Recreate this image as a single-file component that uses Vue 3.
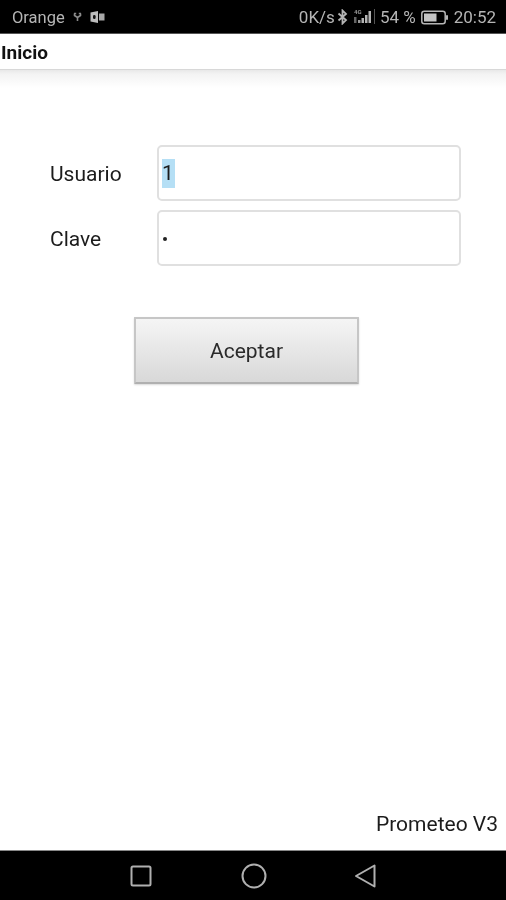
<template>
  <div class="screen">
    <!-- Status bar -->
    <div class="status-bar">
      <div class="status-left">
        <span>Orange</span>
        <svg class="usb" width="9" height="10" viewBox="0 0 9 10">
          <path d="M1 1.5h2.2M5.8 1.5H8M1.5 1.5v2L4.5 5.5l3-2v-2M4.5 5.5V9" fill="none" stroke="#8a8a8a" stroke-width="1.6" />
        </svg>
        <svg class="outlook" width="15" height="12" viewBox="0 0 15 12">
          <path d="M0.5 1.5L8 0v12L0.5 10.5z" fill="#bdbdbd" />
          <rect x="9" y="2.5" width="5.5" height="7" fill="#a8a8a8" />
          <rect x="3" y="4" width="2.6" height="4" rx="1.2" fill="#111" />
        </svg>
      </div>
      <div class="status-right">
        <span class="speed">0K/s</span>
        <svg class="bt" width="11" height="16" viewBox="0 0 11 15">
          <path d="M1.5 4l7.5 6.6L5.5 14V1L9 4.4 1.5 11" fill="none" stroke="#b5b5b5" stroke-width="1.8" />
        </svg>
        <svg class="signal" width="24" height="18" viewBox="0 0 24 18">
          <text x="1" y="6" class="lte">4G</text>
          <rect x="1" y="9" width="2.5" height="6" fill="#666" />
          <rect x="5" y="12" width="2.5" height="3" fill="#999" />
          <rect x="8.5" y="10" width="2.5" height="5" fill="#b5b5b5" />
          <rect x="12" y="7" width="2.5" height="8" fill="#b5b5b5" />
          <rect x="15.5" y="3" width="2.5" height="12" fill="#b5b5b5" />
          <rect x="21" y="1" width="1" height="15" fill="#555" />
        </svg>
        <span class="pct">54 %</span>
        <svg class="battery" width="28" height="15" viewBox="0 0 28 14">
          <rect x="0.8" y="0.8" width="23.4" height="12.4" rx="2.5" fill="none" stroke="#b5b5b5" stroke-width="1.5" />
          <rect x="3" y="3" width="12.5" height="8" fill="#c4c4c4" />
          <rect x="25" y="4.5" width="2" height="5" rx="1" fill="#b5b5b5" />
        </svg>
        <span>20:52</span>
      </div>
    </div>

    <!-- Title -->
    <div class="title-bar">Inicio</div>

    <main class="content">
      <div class="form">
        <div class="row">
          <label class="label-text">Usuario</label>
          <div class="form-input"><span class="selected">1</span></div>
        </div>
        <div class="row">
          <label class="label-text">Clave</label>
          <div class="form-input"><span class="dot"></span></div>
        </div>
      </div>

      <button class="btn-accept">Aceptar</button>

      <div class="version">Prometeo V3</div>
    </main>

    <!-- Nav bar -->
    <div class="nav-bar">
      <svg width="24" height="24" viewBox="0 0 24 24">
        <rect x="2.5" y="2.5" width="19" height="19" rx="1.5" fill="none" stroke="#b0b0b0" stroke-width="2" />
      </svg>
      <svg width="26" height="26" viewBox="0 0 26 26">
        <circle cx="13" cy="13" r="11.5" fill="none" stroke="#b0b0b0" stroke-width="2" />
      </svg>
      <svg class="back" width="24" height="26" viewBox="0 0 24 26">
        <path d="M21.5 2.5v21L3 13z" fill="none" stroke="#b0b0b0" stroke-width="2" stroke-linejoin="round" />
      </svg>
    </div>
  </div>
</template>

<script setup>
</script>

<style>
body {
  margin: 0;
  background: #fff;
}
</style>

<style scoped>
.screen {
  width: 506px;
  height: 900px;
  display: flex;
  flex-direction: column;
  overflow: hidden;
  font-family: Roboto, "Liberation Sans", sans-serif;
  color: #1c1c1c;
  background: #fff;
  filter: blur(0.4px);
}

/* status bar */
.status-bar {
  height: 34px;
  flex: none;
  box-sizing: border-box;
  background: #000;
  border-bottom: 1px solid #555;
  display: flex;
  align-items: center;
  justify-content: space-between;
  padding: 1px 10px 0 12px;
  color: #b5b5b5;
  font-size: 17px;
}
.status-left,
.status-right {
  display: flex;
  align-items: center;
}
.status-left span { font-size: 16.5px; }
.usb { margin-left: 8px; }
.outlook { margin-left: 8px; }
.speed { margin-right: -1px; }
.bt { margin-left: 3px; }
.signal { margin-left: 5px; }
.lte {
  font-size: 6px;
  font-weight: 700;
  fill: #999;
}
.pct { margin-left: 3px; }
.battery { margin: 0 5px 0 5px; }

/* title */
.title-bar {
  height: 36px;
  flex: none;
  box-sizing: border-box;
  padding: 9px 0 0 1px;
  font-size: 19px;
  font-weight: 700;
  line-height: 20px;
  color: #111;
  background: #fff;
  border-bottom: 1px solid #d8d8d8;
}

.content {
  flex: 1;
  display: flex;
  flex-direction: column;
  background: linear-gradient(#e8e8e8, #f3f3f3 4px, #fafafa 12px, #fff 18px);
}

.form {
  margin: 75px 45px 0 50px;
  display: flex;
  flex-direction: column;
  gap: 9px;
}
.row {
  display: flex;
  align-items: center;
}
.label-text {
  width: 107px;
  flex: none;
  padding-top: 2px;
  font-size: 21px;
}
.form-input {
  flex: 1;
  height: 56px;
  box-sizing: border-box;
  border: 2px solid #e0e0e0;
  border-radius: 5px;
  display: flex;
  align-items: center;
  padding-left: 3px;
  font-size: 21px;
}
.selected {
  background: #b5dff5;
  padding: 0 1px 0 0;
  line-height: 29px;
}
.dot {
  width: 4px;
  height: 4px;
  margin: 2px 0 0 1px;
  border-radius: 50%;
  background: #222;
}

.btn-accept {
  width: 225px;
  height: 67px;
  margin: 51px 0 0 134px;
  padding-top: 2px;
  flex: none;
  box-sizing: border-box;
  border: 2px solid #c6c6c6;
  border-bottom-color: #b0b0b0;
  border-radius: 1px;
  background: linear-gradient(#f5f5f5, #d8d8d8);
  box-shadow: 0 1px 2px rgba(0, 0, 0, 0.15);
  font-family: inherit;
  font-size: 21px;
  color: #2a2a2a;
}

.version {
  margin-top: auto;
  padding: 0 8px 14px 0;
  text-align: right;
  font-size: 21px;
  line-height: 24px;
}

/* nav bar */
.nav-bar {
  height: 50px;
  flex: none;
  box-sizing: border-box;
  background: #000;
  border-top: 1px solid #888;
  display: flex;
  align-items: center;
  padding-left: 129px;
  gap: 88px;
}
.back { margin-left: -2px; }
</style>
